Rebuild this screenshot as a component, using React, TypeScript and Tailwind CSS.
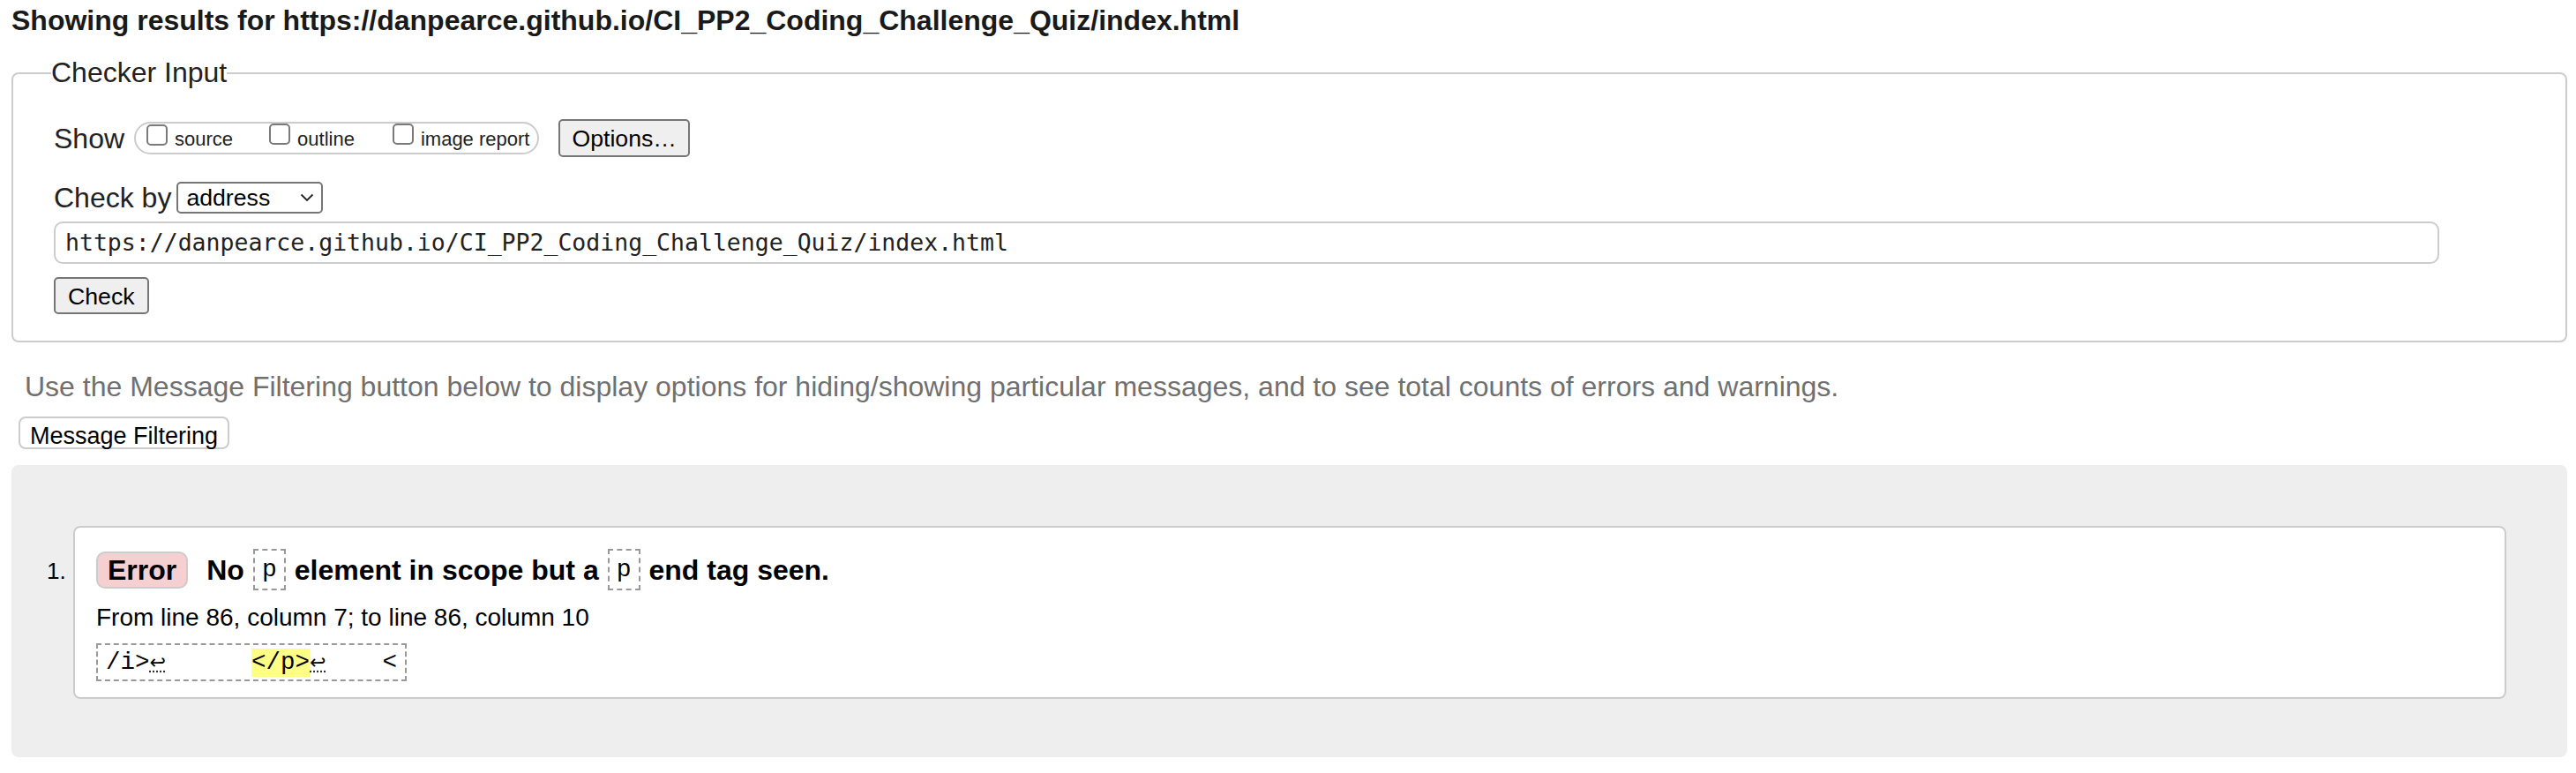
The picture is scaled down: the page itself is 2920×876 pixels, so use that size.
import React from 'react';

const sans = 'font-["Liberation_Sans",Arial,sans-serif]';

function Checkbox() {
  return <span className="inline-block w-[24px] h-[24px] mb-[1px] border-2 border-[#7a7a7a] rounded-[5px] bg-white shrink-0" />;
}

function Lf() {
  return (
    <span className="inline-block w-[16.5px] text-[22px] underline decoration-dotted decoration-[#333] font-['DejaVu_Sans',sans-serif]">
      ↩
    </span>
  );
}

export default function App() {
  return (
    <div className={`${sans} bg-white text-[#222] min-h-[876px] pl-[13px] pr-[10px] pt-[5px]`}>
      <h2 className="text-[32px] leading-[37px] font-bold text-[#1a1a1a]">
        Showing results for https://danpearce.github.io/CI_PP2_Coding_Challenge_Quiz/index.html
      </h2>

      {/* Checker input */}
      <fieldset className="mt-[22px] border-2 border-[#cccccc] rounded-[8px] pl-[46px] pt-[34px] pb-[30px]">
        <legend className="text-[32px] leading-[37px] ml-[-3px]">Checker Input</legend>

        <div className="flex items-center h-[43px]">
          <span className="text-[32px]">Show</span>
          <div className="ml-[11px] h-[37px] box-border flex items-baseline border-2 border-[#cccccc] rounded-full pl-[12px] pr-[9px] text-[22px]">
            <Checkbox />
            <span className="ml-[8px]">source</span>
            <span className="ml-[41px]"><Checkbox /></span>
            <span className="ml-[8px]">outline</span>
            <span className="ml-[43px]"><Checkbox /></span>
            <span className="ml-[8px]">image report</span>
          </div>
          <button className="ml-[22px] h-[43px] px-[13px] border-2 border-[#767676] rounded-[5px] bg-[#efefef] text-[26.67px] text-black">
            Options…
          </button>
        </div>

        <div className="flex items-center h-[36px] mt-[28px] gap-[6px]">
          <span className="text-[32px]">Check by</span>
          <div className="w-[166px] h-[36px] border-2 border-[#767676] rounded-[5px] bg-white flex items-center justify-between pl-[9px] pr-[8px] text-[26.67px] text-black">
            <span>address</span>
            <svg width="16" height="10" viewBox="0 0 16 10" fill="none" stroke="#222" strokeWidth="1.8">
              <path d="M1.5 1.5 L8 8 L14.5 1.5" />
            </svg>
          </div>
        </div>

        <div className="mt-[9px] w-[2704px] h-[48px] border-2 border-[#cccccc] rounded-[10px] flex items-center pl-[11px] font-['DejaVu_Sans_Mono',monospace] text-[26.5px] text-[#222]">
          https://danpearce.github.io/CI_PP2_Coding_Challenge_Quiz/index.html
        </div>

        <button className="mt-[15px] block h-[42px] px-[14px] border-2 border-[#767676] rounded-[5px] bg-[#efefef] text-[26.67px] text-black">
          Check
        </button>
      </fieldset>

      <p className="mt-[32px] ml-[15px] text-[32px] leading-[37px] text-[#707070]">
        Use the Message Filtering button below to display options for hiding/showing particular messages, and to see total counts of errors and warnings.
      </p>

      <button className="mt-[15px] ml-[8px] block h-[37px] px-[11px] border-2 border-[#cccccc] rounded-[8px] bg-white text-[27px] text-black">
        Message Filtering
      </button>

      {/* Results */}
      <div className="mt-[18px] bg-[#eeeeee] rounded-[8px] pl-[40px] pr-[69px] pt-[69px] pb-[66px] flex">
        <div className="w-[30px] pt-[35px] text-[26px] leading-[32px] text-black">1.</div>
        <div className="flex-1 bg-white border-2 border-[#cccccc] rounded-[8px] pl-[24px] pt-[24px] pb-[18px] text-black">
          <div className="flex items-center h-[47px]">
            <span className="h-[42px] flex items-center px-[11px] border-2 border-[#cccccc] rounded-[10px] bg-[#f6cfd0] text-[32px] font-bold">
              Error
            </span>
            <span className="ml-[21px] flex items-center text-[32px] font-bold">
              No
              <code className="mx-[10px] h-[47px] flex items-center px-[8px] border-2 border-dashed border-[#999] font-['Liberation_Mono',monospace] text-[28px] font-normal">
                p
              </code>
              element in scope but a
              <code className="mx-[10px] h-[47px] flex items-center px-[8px] border-2 border-dashed border-[#999] font-['Liberation_Mono',monospace] text-[28px] font-normal">
                p
              </code>
              end tag seen.
            </span>
          </div>

          <p className="mt-[15px] text-[28px] leading-[32px]">From line 86, column 7; to line 86, column 10</p>

          <div className="mt-[13px] inline-flex items-center h-[43px] px-[9px] border-2 border-dashed border-[#999] font-['Liberation_Mono',monospace] text-[27.5px] whitespace-pre">
            <span>/i&gt;</span>
            <Lf />
            <span>{'      '}</span>
            <span className="bg-[#ffff88] h-[32px] flex items-center">&lt;/p&gt;</span>
            <Lf />
            <span>{'    '}&lt;</span>
          </div>
        </div>
      </div>
    </div>
  );
}
